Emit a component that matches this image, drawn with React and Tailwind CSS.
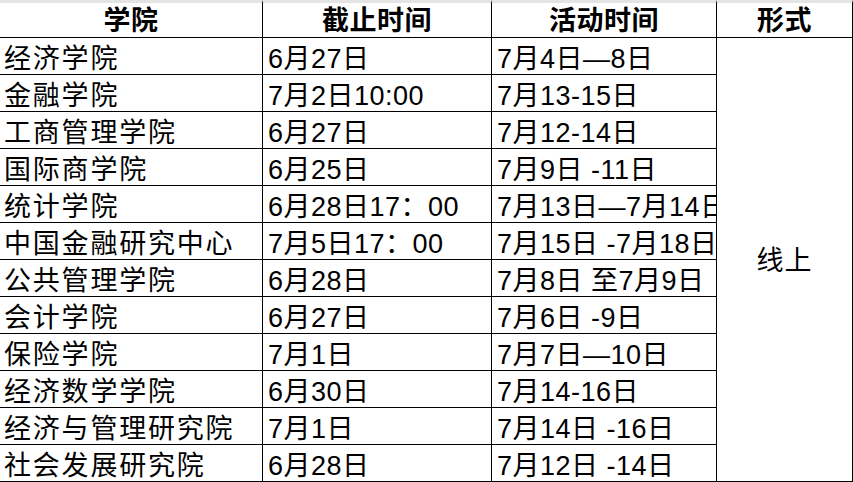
import React from "react";

const rows = [
  ["经济学院", "6月27日", "7月4日—8日"],
  ["金融学院", "7月2日10:00", "7月13-15日"],
  ["工商管理学院", "6月27日", "7月12-14日"],
  ["国际商学院", "6月25日", "7月9日 -11日"],
  ["统计学院", "6月28日17：00", "7月13日—7月14日"],
  ["中国金融研究中心", "7月5日17：00", "7月15日 -7月18日"],
  ["公共管理学院", "6月28日", "7月8日 至7月9日"],
  ["会计学院", "6月27日", "7月6日 -9日"],
  ["保险学院", "7月1日", "7月7日—10日"],
  ["经济数学学院", "6月30日", "7月14-16日"],
  ["经济与管理研究院", "7月1日", "7月14日 -16日"],
  ["社会发展研究院", "6月28日", "7月12日 -14日"],
];

const font = { fontFamily: '"Liberation Sans", "Noto Sans CJK SC", sans-serif' };

export default function App() {
  return (
    <div
      className="w-[853px] h-[482px] bg-white text-black overflow-hidden"
      style={font}
    >
      <div className="grid grid-cols-[263px_229px_225px_136px] grid-rows-[38px_repeat(12,37px)]">
        {/* header */}
        {["学院", "截止时间", "活动时间", "形式"].map((h) => (
          <div
            key={h}
            className="flex items-end justify-center border-r border-b border-black border-t-[3px] border-t-[#e4e4e4] pb-[2px] text-[27px] font-bold leading-none tracking-[0.5px]"
          >
            {h}
          </div>
        ))}

        {/* body */}
        {rows.map((r, i) => (
          <React.Fragment key={r[0]}>
            <div className="flex items-end overflow-hidden whitespace-nowrap border-r border-b border-black pl-[4px] pb-[1px] text-[27px] leading-none tracking-[1.8px]">
              {r[0]}
            </div>
            <div className="flex items-end overflow-hidden whitespace-nowrap border-r border-b border-black pl-[5px] pb-[1px] text-[27px] leading-none tracking-[0.5px]">
              {r[1]}
            </div>
            <div className="flex items-end overflow-hidden whitespace-nowrap border-r border-b border-black pl-[5px] pb-[1px] text-[27px] leading-none tracking-[0.5px]">
              {r[2]}
            </div>
            {i === 0 && (
              <div className="row-span-12 flex items-center justify-center border-r border-b border-black pt-[4px] text-[27px] leading-none tracking-[1px]">
                线上
              </div>
            )}
          </React.Fragment>
        ))}
      </div>
    </div>
  );
}
